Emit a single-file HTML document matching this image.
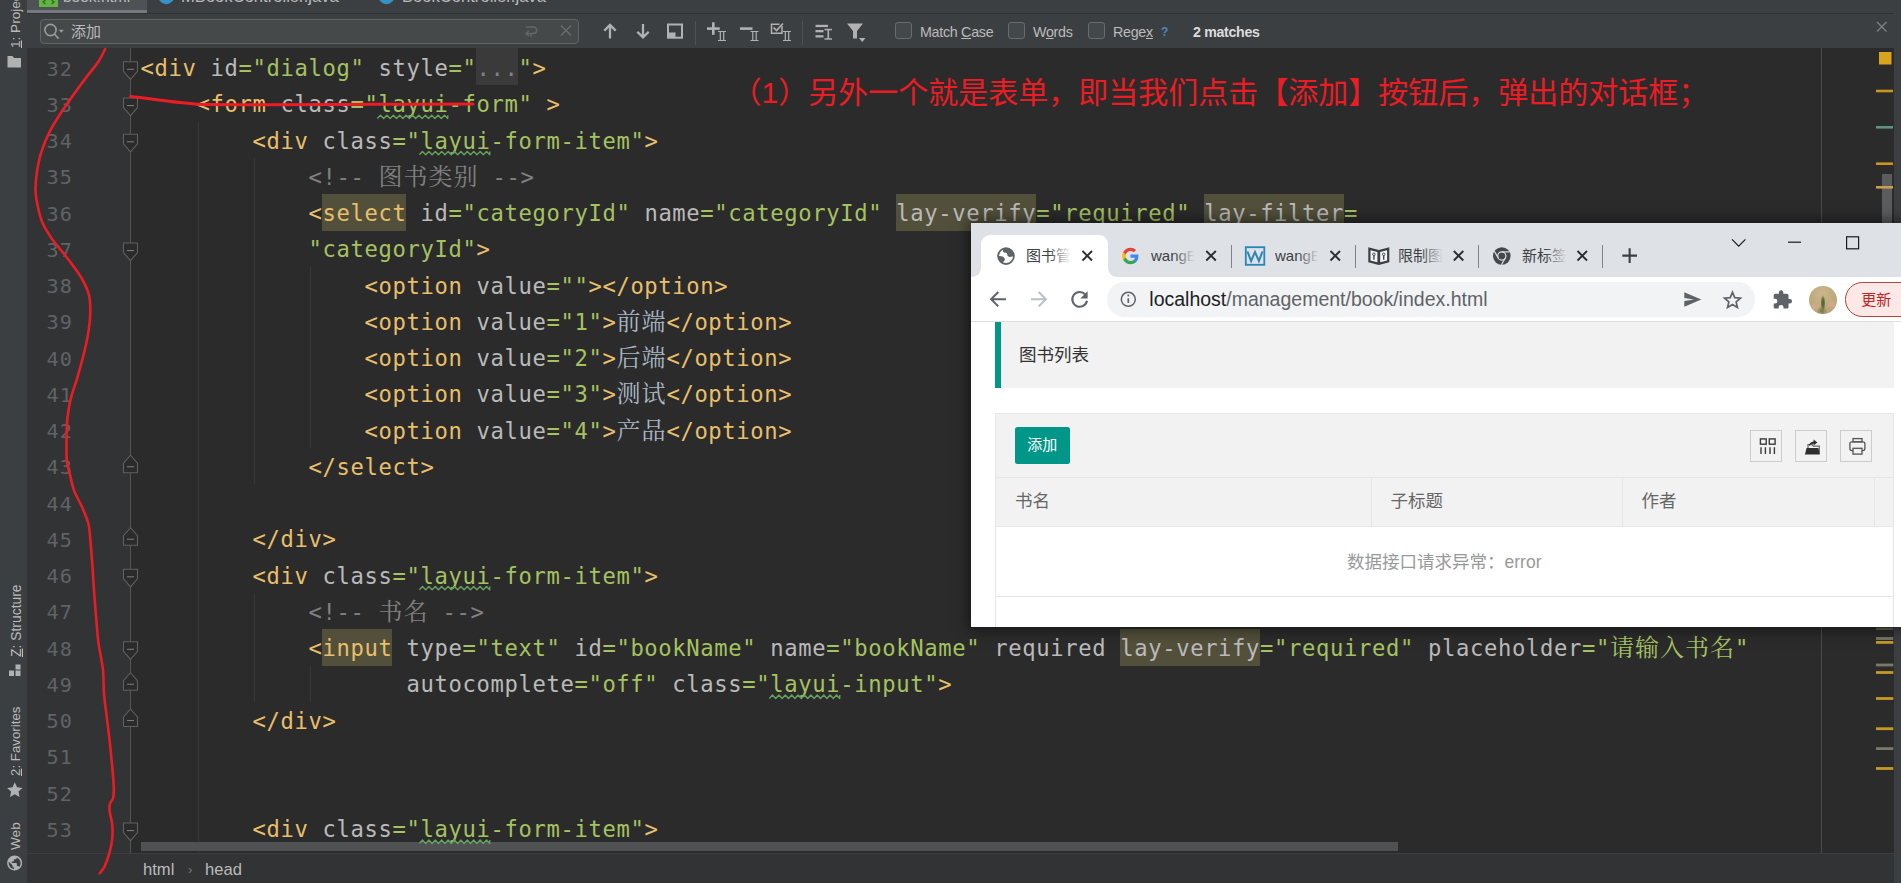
<!DOCTYPE html>
<html lang="zh"><head><meta charset="utf-8"><title>IDE screenshot</title>
<style>
*{box-sizing:border-box;margin:0;padding:0}
html,body{width:1901px;height:883px;overflow:hidden;background:#2b2b2b}
body{position:relative;font-family:"Liberation Sans","Noto Sans CJK SC",sans-serif;color:#bbb}
.abs{position:absolute}
#lstrip{left:0;top:0;width:27px;height:883px;background:#3c3f41}
#rstrip{left:1894px;top:0;width:7px;height:883px;background:#3c3f41}
#tabs{left:27px;top:0;width:1867px;height:14px;background:#3c3f41;border-bottom:1px solid #323232;overflow:hidden}
#tabs .act{left:0;top:0;width:120px;height:12.6px;background:#4e5254;border-bottom:3.7px solid #747a80}
#tabs .tt{top:-12.2px;font-size:16.6px;line-height:18px;color:#bbb;white-space:pre}
#find{left:27px;top:13.7px;width:1867px;height:34.3px;background:#3c3f41}
#finp{left:13px;top:5px;width:539px;height:25px;border:1px solid #646464;border-radius:4px;background:#45494a}
#finp .q{left:30px;top:1px;font-size:15px;line-height:21px;color:#bbb}
.cb{top:8px;width:17px;height:17px;border:1px solid #6b6b6b;border-radius:3px;background:#43494a}
.fl{top:9.7px;font-size:14.3px;letter-spacing:-.3px;line-height:18px;color:#bbb;white-space:pre}
.vsep{width:1px;background:#515151}
#gutter{left:27px;top:48px;width:103px;height:805px;background:#313335}
#foldline{left:130px;top:48px;width:1px;height:805px;background:#555}
#editor{left:131px;top:48px;width:1763px;height:805px;background:#2b2b2b;overflow:hidden}
.ln{left:46.4px;font:20.2px/36.25px "DejaVu Sans Mono","Liberation Mono",monospace;letter-spacing:1.1px;color:#606366;height:36.25px;padding-top:1.5px}
.cl{left:140.6px;font:22.2px/36.25px "DejaVu Sans Mono","Liberation Mono","Noto Serif CJK SC",monospace;letter-spacing:.635px;color:#a9b7c6;height:38px;padding-top:1.2px;white-space:pre}
.cl i,.ln i{font-style:normal}
.t{color:#e8bf6a}.a{color:#bababa}.v{color:#a5c261}.c{color:#808080}
.hlb{background:#52503a;height:36.6px}
.fd{color:#808285}
.cj{font-family:"Liberation Serif","Noto Serif CJK SC",serif;font-size:24px;letter-spacing:1px;font-weight:400;line-height:0}
.wv{}
.ig{width:1px;background:#373737}
#crumbs{left:27px;top:853px;width:1867px;height:30px;background:#313335;border-top:1px solid #3b3d3f}
#crumbs span{position:absolute;top:5.6px;font-size:16.6px;line-height:20px;color:#bbb}
.vt{position:absolute;transform-origin:0 0;transform:rotate(-90deg);white-space:pre;font-size:13.6px;line-height:16px;color:#bbb}

#bw{left:971px;top:223px;width:940px;height:404px;background:#fff;overflow:hidden;box-shadow:0 0 14px 2px rgba(0,0,0,.55)}
#bw .strip{left:0;top:0;width:940px;height:54px;background:#dee1e6}
#bw .atab{left:10px;top:11.5px;width:126.5px;height:43px;background:#fff;border-radius:9px 9px 0 0}
#bw .foot{width:9px;height:9px;top:45px;background:#fff}
#bw .foot b{position:absolute;left:0;top:0;width:9px;height:9px;background:#dee1e6}
#bw .tt{top:22.2px;font-size:15px;line-height:22px;color:#3c4043;white-space:pre;overflow:hidden;height:22px}
#bw .tt:after{content:"";position:absolute;right:0;top:0;width:22px;height:22px}
#bw .tt.on:after{background:linear-gradient(90deg,rgba(255,255,255,0),#fff)}
#bw .tt.off:after{background:linear-gradient(90deg,rgba(222,225,230,0),#dee1e6)}
#bw .ts{top:21.5px;width:1px;height:23.5px;background:#808388}
#bw .bar{left:0;top:54px;width:940px;height:45px;background:#fff;border-bottom:1px solid #dcdee1}
#bw .omni{left:135.5px;top:59px;width:648px;height:34.5px;border-radius:17.3px;background:#f1f3f4}
#bw .url{left:178.3px;top:63.5px;font-size:19.5px;line-height:25px;color:#5f6368;white-space:pre}
#bw .url b{font-weight:normal;color:#202124}
#bw .upd{left:874px;top:59px;width:90px;height:34.5px;border-radius:17.3px;border:1.7px solid #b8433d;background:#fce8e6}
#bw .upd span{position:absolute;left:15.3px;top:5.8px;font-size:15px;line-height:22px;color:#c5221f}
#bw .avatar{left:838px;top:63px;width:27.8px;height:27.8px;border-radius:50%;background:radial-gradient(ellipse 2.5px 8px at 14px 17px,#4f5f33 0,#66703f 55%,rgba(102,112,63,0) 100%),radial-gradient(ellipse 5px 5px at 13px 25px,#6f7845 0,rgba(111,120,69,0) 100%),radial-gradient(ellipse 5px 5px at 23px 19px,#dca78f 0,rgba(220,167,143,0) 100%),radial-gradient(ellipse 6px 5px at 6px 21px,#d9a98a 0,rgba(217,169,138,0) 100%),radial-gradient(circle at 13px 8px,#c9b78b,#bda77c 60%,#b09a72)}
#pg{left:0;top:100px;width:940px;height:304px;background:#fff}
#pg .quote{left:24px;top:-1px;width:899px;height:65.5px;background:#f2f2f2;border-left:6.5px solid #009688;border-radius:0 2px 2px 0}
#pg .quote span{position:absolute;left:18px;top:20.7px;font-size:17.5px;line-height:25px;color:#333}
#pg .tbl{left:24px;top:90px;width:898.5px;height:230px;border:1px solid #e6e6e6;background:#fff}
#pg .tool{left:0;top:0;width:896.5px;height:64px;background:#f2f2f2;border-bottom:1px solid #e6e6e6}
#pg .btn{left:18.5px;top:13px;width:55.5px;height:36.5px;background:#009688;border-radius:2.5px;color:#fff;font-size:15px;line-height:36.5px;text-align:center}
#pg .ib{top:16px;width:32px;height:31.5px;border:1px solid #ccc;background:#f2f2f2}
#pg .head{left:0;top:64px;width:896.5px;height:48.5px;background:#f2f2f2;border-bottom:1px solid #e6e6e6}
#pg .head span{position:absolute;top:10.5px;font-size:17.5px;line-height:25px;color:#666}
#pg .head i{position:absolute;top:0;width:1px;height:48px;background:#e6e6e6}
#pg .none{left:0;top:112.5px;width:896.5px;height:70.5px;border-bottom:1px solid #e6e6e6;text-align:center;font-size:17.5px;line-height:71px;color:#999}

#ann{left:731.5px;top:71px;font-size:30px;line-height:44px;color:#ec1c24;white-space:pre;font-family:"Liberation Sans","Noto Sans CJK SC",sans-serif}
svg.ov{position:absolute;left:0;top:0;width:1901px;height:883px;overflow:hidden;pointer-events:none}
</style></head><body>
<div id="gutter" class="abs"></div><div id="editor" class="abs"></div><div id="foldline" class="abs"></div>
<div class="abs" style="left:1820.5px;top:48px;width:1px;height:805px;background:#4b4b4b"></div>
<div class="ig abs" style="left:198px;top:121.5px;height:761.25px"></div>
<div class="ig abs" style="left:254px;top:157.75px;height:326.25px"></div>
<div class="ig abs" style="left:254px;top:592.75px;height:108.75px"></div>
<div class="ig abs" style="left:310px;top:266.5px;height:181.25px"></div>
<div class="ig abs" style="left:310px;top:665.25px;height:36.25px"></div>
<div class="abs" style="left:322.3px;top:194.1px;width:84px;height:37px;background:#52503a"></div>
<div class="abs" style="left:896.3px;top:194.1px;width:140px;height:37px;background:#52503a"></div>
<div class="abs" style="left:1204.3px;top:194.1px;width:140px;height:37px;background:#52503a"></div>
<div class="abs" style="left:322.3px;top:629.1px;width:70px;height:37px;background:#52503a"></div>
<div class="abs" style="left:1120.3px;top:629.1px;width:140px;height:37px;background:#52503a"></div>
<div class="abs" style="left:476.3px;top:48px;width:42px;height:37.2px;background:#3a3a3a"></div>
<div class="ln abs" style="top:49px">32</div>
<div class="cl abs" style="top:49px"><i class="t">&lt;div</i><i class="a"> id</i><i class="v">="dialog"</i><i class="a"> style</i><i class="v">="</i><i class="fd">...</i><i class="v">"</i><i class="t">&gt;</i></div>
<div class="ln abs" style="top:85.25px">33</div>
<div class="cl abs" style="top:85.25px">    <i class="t">&lt;form</i><i class="a"> class</i><i class="v">="<i class="wv">layui</i>-form"</i> <i class="t">&gt;</i></div>
<div class="ln abs" style="top:121.5px">34</div>
<div class="cl abs" style="top:121.5px">        <i class="t">&lt;div</i><i class="a"> class</i><i class="v">="<i class="wv">layui</i>-form-item"</i><i class="t">&gt;</i></div>
<div class="ln abs" style="top:157.75px">35</div>
<div class="cl abs" style="top:157.75px">            <i class="c">&lt;!-- <i class="cj">图书类别</i> --&gt;</i></div>
<div class="ln abs" style="top:194px">36</div>
<div class="cl abs" style="top:194px">            <i class="t">&lt;<i>select</i></i><i class="a"> id</i><i class="v">="categoryId"</i><i class="a"> name</i><i class="v">="categoryId"</i> <i class="a"><i>lay-verify</i></i><i class="v">="required"</i> <i class="a"><i>lay-filter</i></i><i class="v">=</i></div>
<div class="ln abs" style="top:230.25px">37</div>
<div class="cl abs" style="top:230.25px">            <i class="v">"categoryId"</i><i class="t">&gt;</i></div>
<div class="ln abs" style="top:266.5px">38</div>
<div class="cl abs" style="top:266.5px">                <i class="t">&lt;option</i><i class="a"> value</i><i class="v">=""</i><i class="t">&gt;</i><i class="t">&lt;/option&gt;</i></div>
<div class="ln abs" style="top:302.75px">39</div>
<div class="cl abs" style="top:302.75px">                <i class="t">&lt;option</i><i class="a"> value</i><i class="v">="1"</i><i class="t">&gt;</i><i class="cj">前端</i><i class="t">&lt;/option&gt;</i></div>
<div class="ln abs" style="top:339px">40</div>
<div class="cl abs" style="top:339px">                <i class="t">&lt;option</i><i class="a"> value</i><i class="v">="2"</i><i class="t">&gt;</i><i class="cj">后端</i><i class="t">&lt;/option&gt;</i></div>
<div class="ln abs" style="top:375.25px">41</div>
<div class="cl abs" style="top:375.25px">                <i class="t">&lt;option</i><i class="a"> value</i><i class="v">="3"</i><i class="t">&gt;</i><i class="cj">测试</i><i class="t">&lt;/option&gt;</i></div>
<div class="ln abs" style="top:411.5px">42</div>
<div class="cl abs" style="top:411.5px">                <i class="t">&lt;option</i><i class="a"> value</i><i class="v">="4"</i><i class="t">&gt;</i><i class="cj">产品</i><i class="t">&lt;/option&gt;</i></div>
<div class="ln abs" style="top:447.75px">43</div>
<div class="cl abs" style="top:447.75px">            <i class="t">&lt;/select&gt;</i></div>
<div class="ln abs" style="top:484px">44</div>
<div class="ln abs" style="top:520.25px">45</div>
<div class="cl abs" style="top:520.25px">        <i class="t">&lt;/div&gt;</i></div>
<div class="ln abs" style="top:556.5px">46</div>
<div class="cl abs" style="top:556.5px">        <i class="t">&lt;div</i><i class="a"> class</i><i class="v">="<i class="wv">layui</i>-form-item"</i><i class="t">&gt;</i></div>
<div class="ln abs" style="top:592.75px">47</div>
<div class="cl abs" style="top:592.75px">            <i class="c">&lt;!-- <i class="cj">书名</i> --&gt;</i></div>
<div class="ln abs" style="top:629px">48</div>
<div class="cl abs" style="top:629px">            <i class="t">&lt;<i>input</i></i><i class="a"> type</i><i class="v">="text"</i><i class="a"> id</i><i class="v">="bookName"</i><i class="a"> name</i><i class="v">="bookName"</i><i class="a"> required </i><i class="a"><i>lay-verify</i></i><i class="v">="required"</i><i class="a"> placeholder</i><i class="v">="<i class="cj">请输入书名</i>"</i></div>
<div class="ln abs" style="top:665.25px">49</div>
<div class="cl abs" style="top:665.25px">                   <i class="a">autocomplete</i><i class="v">="off"</i><i class="a"> class</i><i class="v">="<i class="wv">layui</i>-input"</i><i class="t">&gt;</i></div>
<div class="ln abs" style="top:701.5px">50</div>
<div class="cl abs" style="top:701.5px">        <i class="t">&lt;/div&gt;</i></div>
<div class="ln abs" style="top:737.75px">51</div>
<div class="ln abs" style="top:774px">52</div>
<div class="ln abs" style="top:810.25px">53</div>
<div class="cl abs" style="top:810.25px">        <i class="t">&lt;div</i><i class="a"> class</i><i class="v">="<i class="wv">layui</i>-form-item"</i><i class="t">&gt;</i></div>
<div class="abs" style="left:140.5px;top:841.5px;width:1257px;height:9.5px;background:#4f5153"></div>
<svg class="ov" viewBox="0 0 1901 883"><path d="M377.3 118.5L380.5 115.2L383.7 118.5L386.9 115.2L390.1 118.5L393.3 115.2L396.5 118.5L399.7 115.2L402.9 118.5L406.1 115.2L409.3 118.5L412.5 115.2L415.7 118.5L418.9 115.2L422.1 118.5L425.3 115.2L428.5 118.5L431.7 115.2L434.9 118.5L438.1 115.2L441.3 118.5L444.5 115.2L447.7 118.5L447.8 115.2" fill="none" stroke="#67a05f" stroke-width="1.4" stroke-linejoin="round"/>
<path d="M419.3 154.8L422.5 151.4L425.7 154.8L428.9 151.4L432.1 154.8L435.3 151.4L438.5 154.8L441.7 151.4L444.9 154.8L448.1 151.4L451.3 154.8L454.5 151.4L457.7 154.8L460.9 151.4L464.1 154.8L467.3 151.4L470.5 154.8L473.7 151.4L476.9 154.8L480.1 151.4L483.3 154.8L486.5 151.4L489.7 154.8L489.8 151.4" fill="none" stroke="#67a05f" stroke-width="1.4" stroke-linejoin="round"/>
<path d="M419.3 589.8L422.5 586.4L425.7 589.8L428.9 586.4L432.1 589.8L435.3 586.4L438.5 589.8L441.7 586.4L444.9 589.8L448.1 586.4L451.3 589.8L454.5 586.4L457.7 589.8L460.9 586.4L464.1 589.8L467.3 586.4L470.5 589.8L473.7 586.4L476.9 589.8L480.1 586.4L483.3 589.8L486.5 586.4L489.7 589.8L489.8 586.4" fill="none" stroke="#67a05f" stroke-width="1.4" stroke-linejoin="round"/>
<path d="M769.3 698.5L772.5 695.1L775.7 698.5L778.9 695.1L782.1 698.5L785.3 695.1L788.5 698.5L791.7 695.1L794.9 698.5L798.1 695.1L801.3 698.5L804.5 695.1L807.7 698.5L810.9 695.1L814.1 698.5L817.3 695.1L820.5 698.5L823.7 695.1L826.9 698.5L830.1 695.1L833.3 698.5L836.5 695.1L839.7 698.5L839.8 695.1" fill="none" stroke="#67a05f" stroke-width="1.4" stroke-linejoin="round"/>
<path d="M419.3 843.5L422.5 840.1L425.7 843.5L428.9 840.1L432.1 843.5L435.3 840.1L438.5 843.5L441.7 840.1L444.9 843.5L448.1 840.1L451.3 843.5L454.5 840.1L457.7 843.5L460.9 840.1L464.1 843.5L467.3 840.1L470.5 843.5L473.7 840.1L476.9 843.5L480.1 840.1L483.3 843.5L486.5 840.1L489.7 843.5L489.8 840.1" fill="none" stroke="#67a05f" stroke-width="1.4" stroke-linejoin="round"/>
<path d="M123.5 61.8h14v9.5l-7 8-7-8z" fill="#2b2b2b" stroke="#5e6062" stroke-width="1.1"/><path d="M127 69.3h7" stroke="#77797b" stroke-width="1.1"/>
<path d="M123.5 98.05h14v9.5l-7 8-7-8z" fill="#2b2b2b" stroke="#5e6062" stroke-width="1.1"/><path d="M127 105.55h7" stroke="#77797b" stroke-width="1.1"/>
<path d="M123.5 134.3h14v9.5l-7 8-7-8z" fill="#2b2b2b" stroke="#5e6062" stroke-width="1.1"/><path d="M127 141.8h7" stroke="#77797b" stroke-width="1.1"/>
<path d="M123.5 243.05h14v9.5l-7 8-7-8z" fill="#2b2b2b" stroke="#5e6062" stroke-width="1.1"/><path d="M127 250.55h7" stroke="#77797b" stroke-width="1.1"/>
<path d="M123.5 569.3h14v9.5l-7 8-7-8z" fill="#2b2b2b" stroke="#5e6062" stroke-width="1.1"/><path d="M127 576.8h7" stroke="#77797b" stroke-width="1.1"/>
<path d="M123.5 641.8h14v9.5l-7 8-7-8z" fill="#2b2b2b" stroke="#5e6062" stroke-width="1.1"/><path d="M127 649.3h7" stroke="#77797b" stroke-width="1.1"/>
<path d="M123.5 823.05h14v9.5l-7 8-7-8z" fill="#2b2b2b" stroke="#5e6062" stroke-width="1.1"/><path d="M127 830.55h7" stroke="#77797b" stroke-width="1.1"/>
<path d="M130.5 455.25l7 8v9.5h-14v-9.5z" fill="#2b2b2b" stroke="#5e6062" stroke-width="1.1"/><path d="M127 466.75h7" stroke="#77797b" stroke-width="1.1"/>
<path d="M130.5 527.75l7 8v9.5h-14v-9.5z" fill="#2b2b2b" stroke="#5e6062" stroke-width="1.1"/><path d="M127 539.25h7" stroke="#77797b" stroke-width="1.1"/>
<path d="M130.5 672.75l7 8v9.5h-14v-9.5z" fill="#2b2b2b" stroke="#5e6062" stroke-width="1.1"/><path d="M127 684.25h7" stroke="#77797b" stroke-width="1.1"/>
<path d="M130.5 709l7 8v9.5h-14v-9.5z" fill="#2b2b2b" stroke="#5e6062" stroke-width="1.1"/><path d="M127 720.5h7" stroke="#77797b" stroke-width="1.1"/><rect x="1876" y="637.1" width="17.3" height="2.8" fill="#7a7868"/><rect x="1876" y="641" width="17.3" height="2.8" fill="#c49a26"/><rect x="1876" y="663.6" width="17.3" height="2.8" fill="#7a7868"/><rect x="1876" y="671.1" width="17.3" height="2.8" fill="#c49a26"/><rect x="1876" y="697.1" width="17.3" height="2.8" fill="#c49a26"/><rect x="1876" y="727.3" width="17.3" height="2.8" fill="#c49a26"/><rect x="1876" y="747.2" width="17.3" height="2.8" fill="#7a7868"/><rect x="1876" y="767.1" width="17.3" height="2.8" fill="#c49a26"/><rect x="1876" y="627.6" width="17.3" height="2.4" fill="#5e5d54"/></svg>

<div id="tabs" class="abs">
  <div class="act abs"></div>
  <div class="tt abs" style="left:36px;font-size:15.5px">book.html</div>
  <div class="tt abs" style="left:154px">MBookController.java</div>
  <div class="tt abs" style="left:375px">BookController.java</div>
</div>
<div id="find" class="abs">
  <div id="finp" class="abs"><div class="q abs">添加</div></div>
  <div class="vsep abs" style="left:668px;top:7px;height:24px"></div>
  <div class="vsep abs" style="left:775px;top:7px;height:24px"></div>
  <div class="cb abs" style="left:868px"></div><div class="fl abs" style="left:893px">Match <u>C</u>ase</div>
  <div class="cb abs" style="left:981px"></div><div class="fl abs" style="left:1006px">W<u>o</u>rds</div>
  <div class="cb abs" style="left:1061px"></div><div class="fl abs" style="left:1086px">Rege<u>x</u></div>
  <div class="fl abs" style="left:1134px;top:9px;color:#4a88c7;font-weight:bold;font-size:12px;letter-spacing:0">?</div>
  <div class="fl abs" style="left:1166px;font-weight:bold;color:#dcdcdc;font-size:14.2px;letter-spacing:-.32px">2 matches</div>
</div>
<div id="lstrip" class="abs">
  <div class="vt" style="left:8px;top:47.8px"><u>1</u>: Project</div>
  <div class="vt" style="left:8px;top:657px;font-size:13.9px"><u>Z</u>: Structure</div>
  <div class="vt" style="left:8px;top:775.6px;font-size:13.3px"><u>2</u>: Favorites</div>
  <div class="vt" style="left:8px;top:850px">Web</div>
</div>
<div id="rstrip" class="abs"></div>
<div id="crumbs" class="abs"><span style="left:116px">html</span><span style="left:161px;color:#777;font-size:13px">›</span><span style="left:178px">head</span></div>

<svg class="ov" viewBox="0 0 1901 883">
<!-- tab icons -->
<rect x="39" y="-6" width="19" height="13" fill="#62b543"/><path d="M45.5 0l-2.5 2 2.5 2M51.5 0l2.5 2-2.5 2" stroke="#2d6b1f" stroke-width="1.3" fill="none"/>
<circle cx="166.2" cy="-3.8" r="8" fill="#3592c4"/>
<circle cx="386.5" cy="-3.8" r="8" fill="#3592c4"/>
<!-- folder icon in left strip -->
<path d="M7.5 56h5l1.5 2h7v9.5h-13.5z" fill="#afb1b3"/>
<!-- structure icon -->
<g fill="#afb1b3"><rect x="9" y="670.5" width="5" height="5.5"/><rect x="15.5" y="670.5" width="5" height="5.5"/><rect x="15.5" y="664.5" width="5" height="5"/></g>
<!-- star -->
<path d="M14.8 782.3l2.3 5 5.4.6-4 3.7 1.1 5.4-4.8-2.8-4.8 2.8 1.1-5.4-4-3.7 5.4-.6z" fill="#afb1b3"/>
<!-- web globe -->
<path transform="translate(5.7 854.1) scale(.745)" d="M12 2C6.48 2 2 6.48 2 12s4.48 10 10 10 10-4.48 10-10S17.52 2 12 2zm-1 17.93c-3.95-.49-7-3.85-7-7.93 0-.62.08-1.21.21-1.79L9 15v1c0 1.1.9 2 2 2v1.93zm6.9-2.54c-.26-.81-1-1.39-1.9-1.39h-1v-3c0-.55-.45-1-1-1H8v-2h2c.55 0 1-.45 1-1V7h2c1.1 0 2-.9 2-2v-.41c2.93 1.19 5 4.06 5 7.41 0 2.08-.8 3.97-2.1 5.39z" fill="#afb1b3"/>
<!-- find: magnifier -->
<g stroke="#9a9da0" stroke-width="1.6" fill="none"><circle cx="50.5" cy="30" r="5.6"/><path d="M54.6 34.3l4 4.3"/></g>
<path d="M58.8 29.8h5l-2.5 3z" fill="#9a9da0"/>
<!-- newline + clear -->
<g stroke="#646668" stroke-width="1.5" fill="none"><path d="M526 27h7.5a3.2 3.2 0 0 1 0 6.4h-7M528.8 30.8l-2.7 2.6 2.7 2.6M531 33.4v3.4"/></g>
<g stroke="#6c6e70" stroke-width="1.3" fill="none"><path d="M561 25.5l10 10M571 25.5l-10 10"/></g>
<!-- arrows -->
<g stroke="#afb1b3" stroke-width="2.3" fill="none" stroke-linejoin="miter"><path d="M610 38.4v-13M604.3 30.6l5.7-5.7 5.7 5.7"/><path d="M643 23.9v13M637.3 31.7l5.7 5.7 5.7-5.7"/></g>
<!-- square -->
<rect x="668" y="24.5" width="14" height="13.2" fill="none" stroke="#afb1b3" stroke-width="2"/><rect x="668.5" y="32.5" width="7" height="5" fill="#afb1b3"/>
<!-- +II -->
<g fill="#afb1b3"><rect x="707" y="27.3" width="12.7" height="2.6"/><rect x="712" y="22.3" width="2.6" height="12.5"/>
<rect x="740" y="27.3" width="12.5" height="2.6"/></g>
<g stroke="#afb1b3" stroke-width="1.2" fill="none">
<path d="M718 31.5h8M718 40.5h8M720.3 31.5v9M723.7 31.5v9"/>
<path d="M750.5 31.5h8M750.5 40.5h8M752.8 31.5v9M756.2 31.5v9"/>
<path d="M783 31.5h8M783 40.5h8M785.3 31.5v9M788.7 31.5v9"/>
<path d="M782 26v7.3h-10.5v-9h8" stroke-width="1.5"/><path d="M773.5 27.5l3 3 6.5-7" stroke-width="1.7"/>
</g>
<!-- lines + I -->
<g fill="#afb1b3"><rect x="815.5" y="24.8" width="12.5" height="2.3"/><rect x="815.5" y="30" width="8" height="2.3"/><rect x="815.5" y="35.2" width="8" height="2.3"/>
<rect x="824.5" y="28.8" width="7.5" height="1.5"/><rect x="824.5" y="38.2" width="7.5" height="1.5"/><rect x="827.5" y="29" width="1.6" height="10"/></g>
<!-- filter -->
<path d="M847 23.5h16l-6 7.5v7.4h-4v-7.4z" fill="#afb1b3"/><path d="M859 38h6.5l-3.25 4z" fill="#afb1b3"/>
<!-- close x at right -->
<g stroke="#7f8183" stroke-width="1.3"><path d="M1877 22l9.5 9.5M1886.5 22l-9.5 9.5"/></g>
<!-- right marker strip -->
<rect x="1879" y="52" width="12.5" height="12.5" fill="#d9a41c"/>
<rect x="1876" y="89.7" width="17" height="2.6" fill="#c7961e"/>
<rect x="1876" y="126" width="17" height="2.6" fill="#5c9484"/>
<rect x="1876" y="162.4" width="17" height="2.6" fill="#c7961e"/>
<rect x="1882" y="174" width="10" height="60" fill="#5a5c5e"/>
<rect x="1876" y="186" width="17" height="2.6" fill="#c7a04a"/>
</svg>
<div id="ann" class="abs">（1）另外一个就是表单，即当我们点击【添加】按钮后，弹出的对话框；</div>

<div id="bw" class="abs">
  <div class="strip abs"></div>
  <div class="foot abs" style="left:1px"><b style="border-radius:0 0 9px 0"></b></div>
  <div class="foot abs" style="left:136.5px"><b style="border-radius:0 0 0 9px"></b></div>
  <div class="atab abs"></div>
  <div class="tt on abs" style="left:55px;width:45px">图书管理</div>
  <div class="tt off abs" style="left:180px;width:44px">wangEditor</div>
  <div class="ts abs" style="left:259.5px"></div>
  <div class="tt off abs" style="left:304px;width:44px">wangEditor</div>
  <div class="ts abs" style="left:383.5px"></div>
  <div class="tt off abs" style="left:427px;width:45px">限制图片</div>
  <div class="ts abs" style="left:506.5px"></div>
  <div class="tt off abs" style="left:551px;width:45px">新标签页</div>
  <div class="ts abs" style="left:630.5px"></div>
  <div class="bar abs"></div>
  <div class="omni abs"></div>
  <div class="url abs"><b>localhost</b>/management/book/index.html</div>
  <div class="avatar abs"></div>
  <div class="upd abs"><span>更新</span></div>
  <div id="pg" class="abs">
    <div class="quote abs"><span>图书列表</span></div>
    <div class="tbl abs">
      <div class="tool abs">
        <div class="btn abs">添加</div>
        <div class="ib abs" style="left:754px"></div>
        <div class="ib abs" style="left:798.5px"></div>
        <div class="ib abs" style="left:843.5px"></div>
      </div>
      <div class="head abs"><span style="left:19px">书名</span><span style="left:394.5px">子标题</span><span style="left:645.5px">作者</span>
        <i style="left:374.5px"></i><i style="left:626px"></i><i style="left:878px"></i></div>
      <div class="none abs">数据接口请求异常：error</div>
    </div>
  </div>
</div>

<svg class="ov" viewBox="0 0 1901 883">
<!-- globe favicon -->
<g transform="translate(1006 256.1)"><clipPath id="gclip"><circle r="8.2"/></clipPath>
<g clip-path="url(#gclip)" fill="#5f6368"><path d="M-1.5-9c-1.2 1.8-2.3 3.6-1.2 4.8 1 1 2.2.3 3.2 1.2 1.2 1 .6 2.6 1.8 3.5 1.3 1 3.2.2 4.5-.3l4-1v-9z"/><path d="M-9 .2c1.8-.5 4-.7 5.5.2 1.5.8 2.6 2 2.3 3.4-.3 1.3-1.8 1.5-2 2.9-.1 1 .2 2-.3 3h-6z"/></g>
<circle r="7.9" fill="none" stroke="#5f6368" stroke-width="1.8"/></g>
<!-- tab close X's -->
<g stroke="#2b2d30" stroke-width="1.9" fill="none"><path d="M1082.5 251l9.5 9.5M1092 251l-9.5 9.5"/><path d="M1206.3 251l9.5 9.5M1215.8 251l-9.5 9.5"/><path d="M1330.5 251l9.5 9.5M1340 251l-9.5 9.5"/><path d="M1453.8 251l9.5 9.5M1463.3 251l-9.5 9.5"/><path d="M1577.5 251l9.5 9.5M1587 251l-9.5 9.5"/></g>
<!-- Google G -->
<g transform="translate(1121.5 247) scale(.375)"><path fill="#4285F4" d="M45.12 24.5c0-1.56-.140-3.06-.400-4.5H24v8.51h11.84c-.510 2.75-2.06 5.08-4.39 6.64v5.52h7.11c4.16-3.83 6.56-9.47 6.56-16.17z"/><path fill="#34A853" d="M24 46c5.94 0 10.92-1.97 14.56-5.33l-7.11-5.52c-1.97 1.32-4.49 2.1-7.45 2.1-5.73 0-10.58-3.87-12.31-9.07H4.34v5.7C7.96 41.07 15.4 46 24 46z"/><path fill="#FBBC05" d="M11.69 28.18C11.25 26.86 11 25.45 11 24s.250-2.86.690-4.18v-5.7H4.34C2.85 17.09 2 20.45 2 24c0 3.55.850 6.91 2.34 9.88l7.35-5.7z"/><path fill="#EA4335" d="M24 10.75c3.23 0 6.13 1.11 8.41 3.29l6.31-6.31C34.91 4.18 29.93 2 24 2 15.4 2 7.96 6.93 4.34 14.12l7.35 5.7c1.73-5.2 6.58-9.07 12.31-9.07z"/></g>
<!-- W icon -->
<g stroke="#2a86b6" fill="none"><rect x="1245.8" y="247.2" width="18.5" height="17.6" stroke-width="1.8"/><path d="M1247.5 251.5l3.6 9.5 3.9-9 3.9 9 3.6-9.5" stroke-width="2"/></g>
<!-- book icon -->
<g><path d="M1368.3 247.3l10.5 2.7 10.5-2.7v15l-10.5 2.7-10.5-2.7z" fill="#3c3f43"/>
<path d="M1370.5 250.2l6.9 1.8v10.2l-6.9-1.8zM1387.1 250.2l-6.9 1.8v10.2l6.9-1.8z" fill="#f4f5f6"/>
<path d="M1373.9 259.8v-4.3M1383.7 259.8v-4.3" stroke="#3c3f43" stroke-width="1.3"/><circle cx="1373.9" cy="254.3" r="1.3" fill="none" stroke="#3c3f43" stroke-width=".9"/><circle cx="1383.7" cy="254.3" r="1.3" fill="none" stroke="#3c3f43" stroke-width=".9"/></g>
<!-- chrome icon -->
<g><circle cx="1501.8" cy="256" r="8.8" fill="#45484c"/><circle cx="1501.8" cy="256" r="4.1" fill="none" stroke="#dee1e6" stroke-width="1.2"/><path d="M1501.8 251.9h7.79" stroke="#dee1e6" stroke-width="1.2"/><g transform="rotate(120 1501.8 256)"><path d="M1501.8 251.9h7.79" stroke="#dee1e6" stroke-width="1.2"/></g><g transform="rotate(240 1501.8 256)"><path d="M1501.8 251.9h7.79" stroke="#dee1e6" stroke-width="1.2"/></g></g>
<!-- plus -->
<path d="M1622.3 255.6h14.7M1629.65 248.2v14.8" stroke="#3c4043" stroke-width="2.1"/>
<!-- window controls -->
<g stroke="#1b1b1b" stroke-width="1.2" fill="none"><path d="M1732 239.3l6.7 6.8 6.7-6.8"/><path d="M1788 242.2h13"/><rect x="1846.6" y="236.8" width="12" height="12"/></g>
<!-- nav -->
<g stroke="#5f6368" stroke-width="2" fill="none"><path d="M1006 299.2h-14.5M998.3 292l-7.2 7.2 7.2 7.2"/></g>
<g stroke="#bcc0c5" stroke-width="2" fill="none"><path d="M1031 299.2h14.5M1038.7 292l7.2 7.2-7.2 7.2"/></g>
<g stroke="#5f6368" stroke-width="2.1" fill="none"><path d="M1085.3 294.5a7.4 7.4 0 1 0 1.7 6.2"/></g><path d="M1087.6 291.3v7.3h-7.3z" fill="#5f6368"/>
<!-- info -->
<g><circle cx="1128.3" cy="299.3" r="7" fill="none" stroke="#5f6368" stroke-width="1.5"/><path d="M1128.3 298.3v4.7" stroke="#5f6368" stroke-width="1.7"/><circle cx="1128.3" cy="295.6" r="1" fill="#5f6368"/></g>
<!-- send -->
<path d="M1684.3 292.2l17 7.3-17 7.3v-5.7l9.5-1.6-9.5-1.6z" fill="#5f6368"/>
<!-- star -->
<path d="M1732.5 292.3l2.25 5.3 5.75.5-4.35 3.8 1.3 5.6-4.95-3-4.95 3 1.3-5.6-4.35-3.8 5.75-.5z" fill="none" stroke="#5f6368" stroke-width="1.7" stroke-linejoin="miter"/>
<!-- puzzle -->
<path d="M1789.8 299h-1.3v-3.5c0-1-.800-1.7-1.7-1.7h-3.5v-1.3a2.2 2.2 0 0 0-4.4 0v1.3h-3.5c-1 0-1.7.800-1.7 1.7v3.3h1.3a2.4 2.4 0 0 1 0 4.8h-1.3v3.3c0 1 .800 1.7 1.7 1.7h3.3v-1.3a2.4 2.4 0 0 1 4.8 0v1.3h3.3c1 0 1.7-.800 1.7-1.7v-3.5h1.3a2.2 2.2 0 0 0 0-4.4z" fill="#5f6368"/>
<!-- layui table tool icons -->
<g stroke="#3a3a3a" stroke-width="1.4" fill="none"><rect x="1760.4" y="438.9" width="5.8" height="5.3"/><rect x="1769.3" y="438.9" width="5.8" height="5.3"/><path d="M1761 447.2v6.8M1765.4 447.2v6.8M1770 447.2v6.8M1774.4 447.2v6.8"/></g>
<g><path d="M1808 454v-9.3h4l1.3 1.5h6v7.8" fill="none" stroke="#666" stroke-width="1.2"/><path d="M1806.6 448h11.8l1.3 6.4h-14.8z" fill="#2f2f2f"/><path d="M1808.8 446.5c.2-3 2-4.8 4.8-5v-1.9l3.8 3-3.8 3v-1.9c-2 .1-3.6 1-4.8 2.8z" fill="#2f2f2f"/></g>
<g stroke="#555" stroke-width="1.3" fill="none"><rect x="1853" y="438.6" width="9" height="3.2"/><rect x="1849.9" y="441.8" width="15" height="8.8" rx="2"/><rect x="1853" y="448.3" width="9" height="5.8" fill="#f2f2f2"/></g>
<path d="M105.1 49C104 51.1 101.6 56.8 98.5 61.4C95.4 66 90.8 71.4 86.6 76.9C82.4 82.5 77.9 88.6 73.5 94.7C69.1 100.8 64.4 107.6 60.4 113.7C56.4 119.8 52.9 125.2 49.7 131.6C46.5 137.9 43.5 145.3 41.4 151.8C39.3 158.3 38.1 164.5 37.1 170.8C36.1 177.1 35.4 183.9 35.5 189.8C35.6 195.8 36.6 200.9 37.8 206.5C39 212.1 40.4 217.9 42.6 223.1C44.8 228.2 47.9 232.9 50.9 237.4C53.9 241.9 57.4 245.7 60.8 250C64.2 254.3 67.6 258.4 71.1 263.1C74.6 267.9 78.8 273.1 81.8 278.5C84.8 283.9 87.6 289.2 89 295.2C90.4 301.1 90.4 307.5 90.2 314.2C90 320.9 89 328.5 87.8 335.6C86.6 342.7 84.8 349.9 83 357C81.2 364.1 79.1 371.7 77.1 378.4C75.1 385.1 72.7 391 71.1 397.4C69.5 403.8 68.3 410.1 67.6 416.5C66.8 422.9 66.7 428.2 66.6 435.5C66.5 442.8 66.2 453.5 66.8 460C67.3 466.5 68.7 469.2 69.9 474.3C71.1 479.4 72.1 485.3 74.2 490.9C76.3 496.4 79.9 502.1 82.3 507.6C84.7 513.2 87.1 518.3 88.5 524.2C89.9 530.1 89.9 536.1 90.6 543.2C91.3 550.3 91.9 558.7 92.5 567C93.1 575.3 93.6 584.9 94.2 593.2C94.8 601.5 95.4 608.7 96.1 617C96.8 625.3 97.3 634.3 98.5 643.1C99.7 651.9 102.1 661.5 103 670C103.9 678.5 103.3 686.1 104 694.1C104.7 702.1 105.9 710.2 106.9 718.2C107.9 726.2 108.9 734.4 109.8 742.4C110.7 750.4 111.5 759.3 112.2 766.5C112.9 773.7 113.5 780.6 113.7 785.8C113.9 791 113.9 794.8 113.2 797.8C112.5 800.8 110.4 801.5 109.8 803.9C109.2 806.3 109.4 808.9 109.8 812.3C110.2 815.7 111.8 820 112.2 824.4C112.6 828.8 112.7 834 112.2 838.8C111.7 843.6 110.6 848.7 109.3 853.3C108 857.9 106.1 863.3 104.5 866.6C102.9 869.9 100.5 872.2 99.7 873.3" fill="none" stroke="#ec1c24" stroke-width="2.6" stroke-linecap="round" stroke-linejoin="round"/><path d="M130.7 96.5C150 98.5 175 103 199 104.2S400 104 473 104" fill="none" stroke="#ec1c24" stroke-width="3" stroke-linecap="round"/></svg>
</body></html>
